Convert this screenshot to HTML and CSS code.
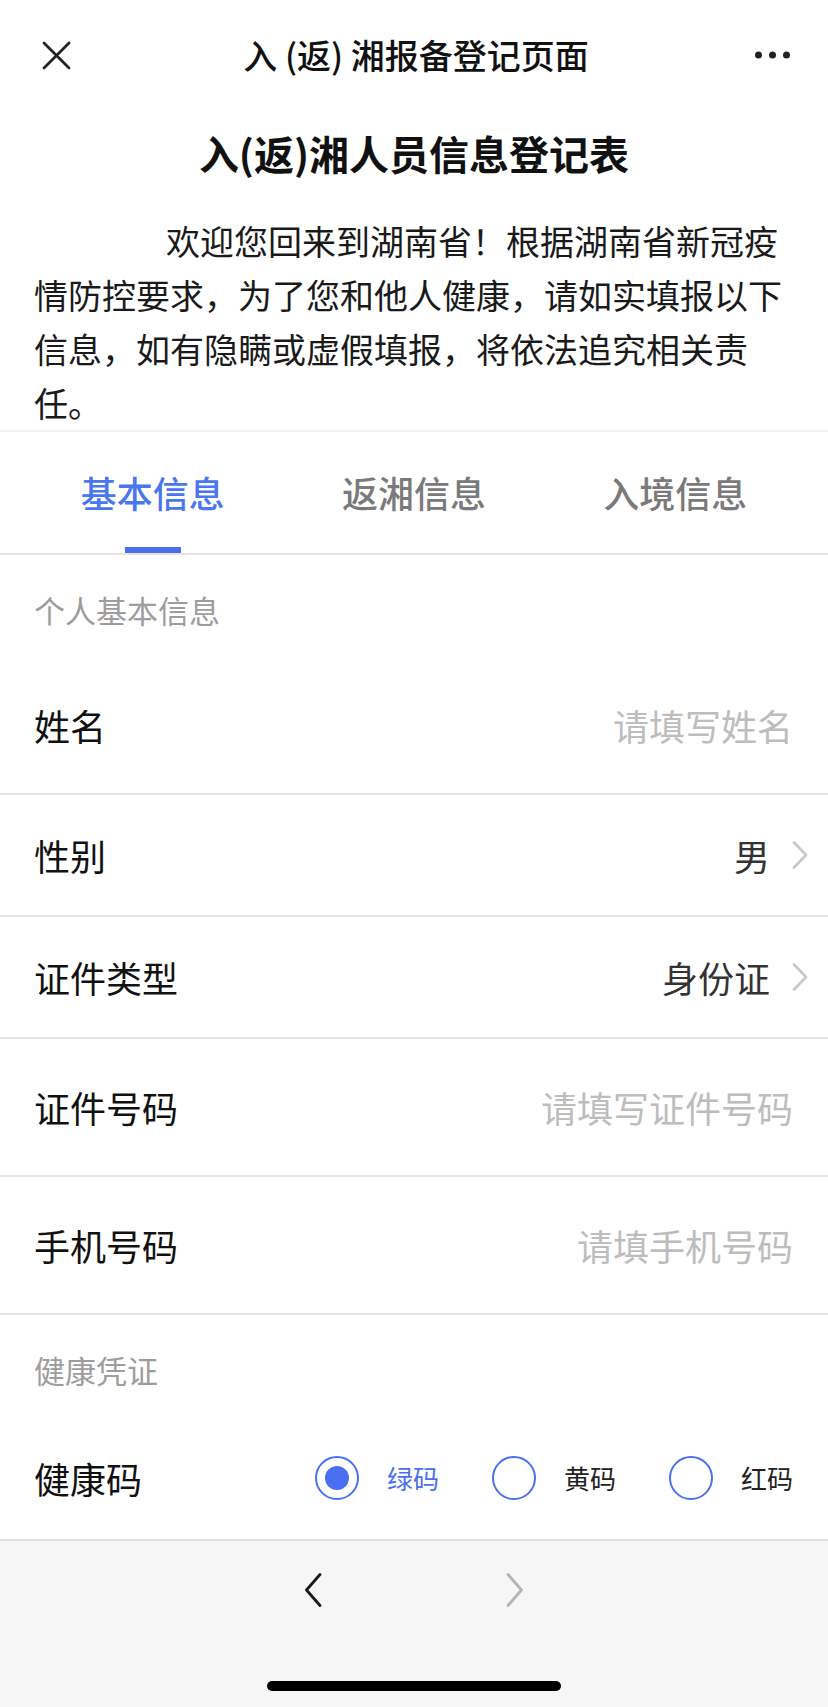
FILE: index.html
```html
<!DOCTYPE html>
<html lang="zh-CN">
<head>
<meta charset="utf-8">
<title>入(返)湘报备登记页面</title>
<link rel="stylesheet" href="styles.css">
</head>
<body>
<div class="page">
  <header class="navbar">
    <svg class="nav-close" viewBox="0 0 29 29" width="29" height="29">
      <path d="M2 2 L27 27 M27 2 L2 27" stroke="#222" stroke-width="2.8" stroke-linecap="round" fill="none"/>
    </svg>
    <div class="nav-title">入 (返) 湘报备登记页面</div>
    <svg class="nav-more" viewBox="0 0 35 8" width="35" height="8">
      <circle cx="3.5" cy="4" r="3.5" fill="#222"/>
      <circle cx="17.5" cy="4" r="3.5" fill="#222"/>
      <circle cx="31.5" cy="4" r="3.5" fill="#222"/>
    </svg>
  </header>

  <main class="content">
    <h1 class="form-title">入(返)湘人员信息登记表</h1>
    <p class="intro">欢迎您回来到湖南省！根据湖南省新冠疫情防控要求，为了您和他人健康，请如实填报以下信息，如有隐瞒或虚假填报，将依法追究相关责任。</p>

    <nav class="tabs">
      <div class="tab active"><span>基本信息</span><span class="tab-indicator"></span></div>
      <div class="tab"><span>返湘信息</span></div>
      <div class="tab"><span>入境信息</span></div>
    </nav>

    <section class="group">
      <div class="group-title">个人基本信息</div>
      <div class="row">
        <span class="label">姓名</span>
        <input class="field" type="text" placeholder="请填写姓名">
      </div>
      <div class="row row-select">
        <span class="label">性别</span>
        <span class="value">男</span>
        <svg class="chevron" viewBox="0 0 16 28" width="16" height="28"><path d="M2 1.5 L14 14 L2 26.5" stroke="#c8c8c8" stroke-width="2.6" fill="none" stroke-linecap="round" stroke-linejoin="round"/></svg>
      </div>
      <div class="row row-select">
        <span class="label">证件类型</span>
        <span class="value">身份证</span>
        <svg class="chevron" viewBox="0 0 16 28" width="16" height="28"><path d="M2 1.5 L14 14 L2 26.5" stroke="#c8c8c8" stroke-width="2.6" fill="none" stroke-linecap="round" stroke-linejoin="round"/></svg>
      </div>
      <div class="row">
        <span class="label">证件号码</span>
        <input class="field" type="text" placeholder="请填写证件号码">
      </div>
      <div class="row">
        <span class="label">手机号码</span>
        <input class="field" type="text" placeholder="请填手机号码">
      </div>
    </section>

    <section class="group">
      <div class="group-title">健康凭证</div>
      <div class="row row-radio">
        <span class="label">健康码</span>
        <div class="radios">
          <div class="radio checked"><span class="radio-circle"></span><span>绿码</span></div>
          <div class="radio"><span class="radio-circle"></span><span>黄码</span></div>
          <div class="radio"><span class="radio-circle"></span><span>红码</span></div>
        </div>
      </div>
    </section>
  </main>

  <footer class="toolbar">
    <div class="toolbar-nav">
      <div class="tool-btn">
        <svg viewBox="0 0 18 34" width="18" height="34"><path d="M16 1.5 L2.5 17 L16 32.5" stroke="#1a1a1a" stroke-width="2.8" fill="none" stroke-linecap="round" stroke-linejoin="round"/></svg>
      </div>
      <div class="tool-btn">
        <svg viewBox="0 0 18 34" width="18" height="34"><path d="M2 1.5 L15.5 17 L2 32.5" stroke="#b4b4b4" stroke-width="2.8" fill="none" stroke-linecap="round" stroke-linejoin="round"/></svg>
      </div>
    </div>
    <div class="home-indicator"></div>
  </footer>
</div>
</body>
</html>
```

FILE: styles.css
```css
* {
  box-sizing: border-box;
  margin: 0;
  padding: 0;
}

html, body {
  width: 828px;
  height: 1707px;
}

body {
  font-family: "Noto Sans CJK SC", "Noto Sans", sans-serif;
  color: #111;
  background: #fff;
  overflow: hidden;
}

.page {
  display: flex;
  flex-direction: column;
  height: 1707px;
}

/* Navigation bar */
.navbar {
  flex: none;
  height: 110px;
  display: grid;
  grid-template-columns: 1fr auto 1fr;
  align-items: center;
  padding: 0 38px 0 42px;
}

.nav-close {
  justify-self: start;
  display: block;
}

.nav-title {
  font-size: 34px;
  font-weight: 500;
  line-height: 40px;
  color: #111;
}

.nav-more {
  justify-self: end;
  display: block;
}

/* Content */
.content {
  flex: 1;
  overflow: hidden;
}

.form-title {
  font-size: 40px;
  font-weight: 700;
  line-height: 46px;
  text-align: center;
  padding-top: 20px;
  margin-bottom: 38px;
  color: #111;
}

.intro {
  font-size: 34px;
  line-height: 54px;
  padding: 0 34px;
  text-indent: 132px;
  color: #1a1a1a;
}

/* Tabs */
.tabs {
  display: flex;
  padding: 0 22px;
  border-top: 2px solid #f2f2f2;
  border-bottom: 2px solid #e4e4e4;
}

.tab {
  flex: 1;
  height: 121px;
  display: flex;
  flex-direction: column;
  align-items: center;
  padding-top: 42px;
  font-size: 36px;
  font-weight: 500;
  line-height: 36px;
  color: #7a7a7a;
}

.tab.active {
  color: #4a76ef;
}

.tab-indicator {
  margin-top: auto;
  width: 56px;
  height: 6px;
  background: #4a70ee;
}

/* Groups & rows */
.group-title {
  height: 102px;
  padding: 39px 34px 0;
  font-size: 31px;
  line-height: 32px;
  color: #9d9d9d;
}

.row {
  display: flex;
  align-items: center;
  height: 138px;
  padding: 0 35px 0 34px;
  border-bottom: 2px solid #e5e5e5;
}

.row-select {
  height: 122px;
  padding-right: 20px;
}

.row-radio {
  height: 122px;
  padding-right: 35px;
  border-bottom: none;
}

.label {
  flex: none;
  font-size: 36px;
  line-height: 44px;
  color: #111;
}

.field {
  flex: 1;
  min-width: 0;
  border: none;
  outline: none;
  background: transparent;
  font-family: inherit;
  font-size: 36px;
  line-height: 44px;
  text-align: right;
  color: #333;
}

.field::placeholder {
  color: #bdbdbd;
}

.value {
  margin-left: auto;
  font-size: 36px;
  line-height: 44px;
  color: #333;
}

.chevron {
  display: block;
  margin-left: 22px;
}

/* Radios */
.radios {
  margin-left: auto;
  display: flex;
  align-items: center;
  gap: 53px;
}

.radio {
  display: flex;
  align-items: center;
  gap: 28px;
  font-size: 26px;
  line-height: 32px;
  color: #222;
}

.radio-circle {
  width: 44px;
  height: 44px;
  border: 2px solid #4a6ff0;
  border-radius: 50%;
  display: flex;
  align-items: center;
  justify-content: center;
}

.radio.checked {
  color: #4a6ff0;
}

.radio.checked .radio-circle::after {
  content: "";
  width: 24px;
  height: 24px;
  border-radius: 50%;
  background: #4a6ff0;
}

/* Bottom toolbar */
.toolbar {
  flex: none;
  height: 168px;
  border-top: 2px solid #dedede;
  background: #f6f6f6;
  display: flex;
  flex-direction: column;
  align-items: center;
}

.toolbar-nav {
  height: 97px;
  display: flex;
  align-items: center;
  gap: 142px;
}

.tool-btn {
  width: 60px;
  display: flex;
  justify-content: center;
}

.tool-btn svg {
  display: block;
}

.home-indicator {
  margin-top: 43px;
  width: 294px;
  height: 10px;
  border-radius: 5px;
  background: #000;
}
```
